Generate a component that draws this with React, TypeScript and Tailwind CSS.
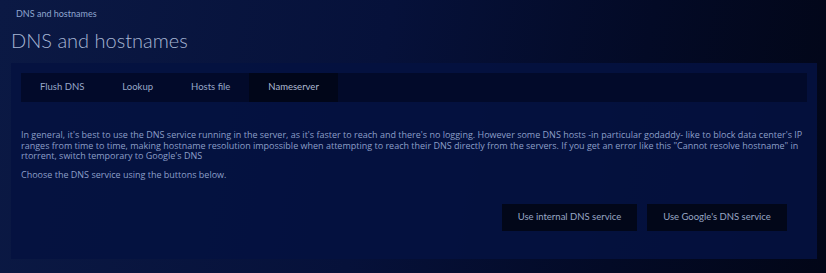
import React from "react";

const tabs = ["Flush DNS", "Lookup", "Hosts file", "Nameserver"];

function Tab({ label, active }: { label: string; active?: boolean }) {
  return (
    <div
      className={
        "flex h-full items-center px-[19px] text-[9.5px] " +
        (active ? "bg-[#010619] text-[#aebad3]" : "text-[#98a8c8]")
      }
    >
      {label}
    </div>
  );
}

export default function App() {
  return (
    <div
      className="min-h-[273px] w-full bg-[linear-gradient(100deg,#0b1944_0%,#06113a_45%,#030a26_75%,#020617_100%)] pl-[11px] pr-[9px] pt-[8px] pb-[14px] text-[#8fa1c4]"
      style={{ fontFamily: "Lato, 'Open Sans', sans-serif" }}
    >
      <div className="ml-[5px] text-[9px] leading-[12px] text-[#8fa6cf]">DNS and hostnames</div>
      <h1 className="mt-[8px] text-[20px] font-light leading-[24px] text-[#a7b6d4]">DNS and hostnames</h1>

      <div className="mt-[11px] bg-[#041240]/90 p-[10px] pb-[28px]">
        <div className="flex h-[29px] bg-[#020a2a]">
          {tabs.map((t) => (
            <Tab key={t} label={t} active={t === "Nameserver"} />
          ))}
        </div>

        <div
          className="mt-[28px] text-[9px] leading-[10.5px] text-[#8c9fc8]"
          style={{ fontFamily: "'Open Sans', Lato, sans-serif" }}
        >
          <p>
            In general, it's best to use the DNS service running in the server, as it's faster to reach and there's no logging. However some DNS hosts -in particular godaddy- like to block data center's IP ranges from time to time, making hostname resolution impossible when attempting to reach their DNS directly from the servers. If you get an error like this "Cannot resolve hostname" in rtorrent, switch temporary to Google's DNS
          </p>
          <p className="mt-[8.5px]">Choose the DNS service using the buttons below.</p>
        </div>

        <div className="mt-[23px] flex justify-end gap-[10px] pr-[20px]">
          <button className="h-[27px] w-[135px] bg-[#020719] text-[9.5px] text-[#98a6c4]">
            Use internal DNS service
          </button>
          <button className="h-[27px] w-[140px] bg-[#020719] text-[9.5px] text-[#98a6c4]">
            Use Google's DNS service
          </button>
        </div>
      </div>
    </div>
  );
}
